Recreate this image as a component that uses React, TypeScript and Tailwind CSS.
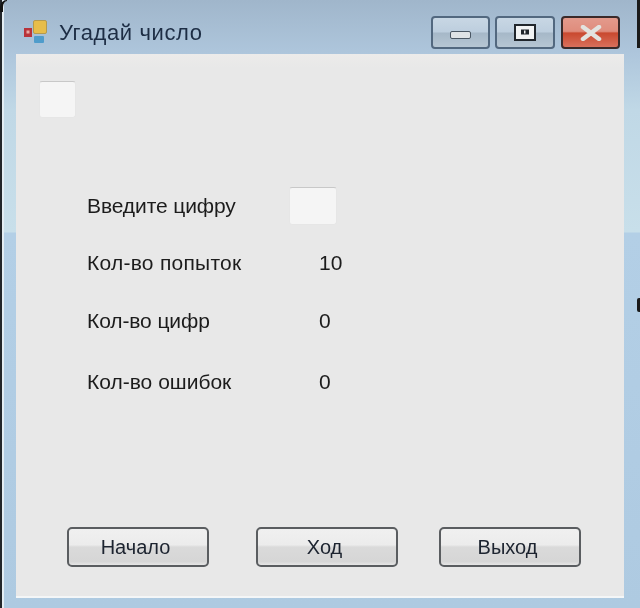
const FONT = "font-['Liberation_Sans',Arial,sans-serif]";

function CaptionButton({ className, children }: { className: string; children: React.ReactNode }) {
  return (
    <div className={`flex h-[33px] items-center justify-center rounded-[4px] border-2 blur-[0.3px] ${className}`}>
      {children}
    </div>
  );
}

function ActionButton({ label, className }: { label: string; className: string }) {
  return (
    <button
      type="button"
      className={`flex h-[40px] w-[142px] items-center justify-center rounded-[5px] border-2 border-[#5a5d60] bg-[linear-gradient(#f0f0f0_0%,#ececec_44%,#dadada_50%,#d6d6d6_90%,#e6e6e6_100%)] pr-[5px] text-[20px] text-[#1d2430] ${className}`}
    >
      <span className="blur-[0.5px]">{label}</span>
    </button>
  );
}

function TextBox({ className }: { className: string }) {
  return (
    <div className={`rounded-[3px] border border-[#e6e6e6] border-t-[#c8c8c8] bg-[#f5f5f5] blur-[0.3px] ${className}`} />
  );
}

function InfoRow({ label, value, className, labelClass }: { label: string; value: string; className: string; labelClass: string }) {
  return (
    <div className={`flex items-center text-[21px] leading-[24px] text-[#1c1c1c] ${className}`}>
      <span className={`w-[232px] blur-[0.5px] ${labelClass}`}>{label}</span>
      <span className="blur-[0.5px]">{value}</span>
    </div>
  );
}

export default function App() {
  return (
    <div className={`h-[608px] w-[640px] overflow-hidden ${FONT} relative flex flex-col bg-[linear-gradient(#a0b6cb_0px,#aec6dc_54px,#c0d8e6_110px,#c8dfea_232px,#b3cfe6_233px,#aecae1_608px)]`}>
      {/* title bar */}
      <div className="flex h-[54px] shrink-0 items-start pl-[23px] pr-[20px] pt-[16px]">
        <svg width="25" height="28" viewBox="0 0 25 28" className="mt-[4px] shrink-0 blur-[0.5px]">
          <rect x="1" y="8" width="8" height="9" fill="#b8333a" />
          <rect x="3.5" y="10.5" width="3" height="3" fill="#e9a9a4" />
          <rect x="10.5" y="0.5" width="13" height="13" rx="1.5" fill="#e7bd4a" stroke="#b49a4e" />
          <rect x="11" y="16" width="10" height="7" rx="1" fill="#4f9ccb" />
        </svg>
        <span className="ml-[11px] mt-[4px] text-[22px] leading-[26px] tracking-[0.6px] text-[#1d2d44] blur-[0.5px]">Угадай число</span>
        <div className="ml-auto flex items-center">
          <CaptionButton className="w-[59px] border-[#52687f] bg-[linear-gradient(#c8d7e4_0%,#bdcede_48%,#a6b8c8_52%,#b6c6d3_100%)]">
            <div className="mt-[5px] h-[8px] w-[21px] rounded-[2px] border border-[#4a5764] bg-[#dfe3e6]" />
          </CaptionButton>
          <CaptionButton className="ml-[5px] w-[60px] border-[#52687f] bg-[linear-gradient(#c8d7e4_0%,#bdcede_48%,#a6b8c8_52%,#b6c6d3_100%)]">
            <svg width="22" height="17" viewBox="0 0 22 17">
              <rect x="1" y="1" width="20" height="15" fill="#f1f3f4" stroke="#20262c" strokeWidth="2" />
              <rect x="7" y="5.5" width="8" height="5" fill="#20262c" />
              <rect x="10" y="6.5" width="1.5" height="3" fill="#f1f3f4" />
            </svg>
          </CaptionButton>
          <CaptionButton className="ml-[6px] w-[59px] border-[#3a2a2a] bg-[linear-gradient(#e39a8c_0%,#df8c7c_46%,#c9492f_52%,#d9705c_100%)]">
            <svg width="22" height="16" viewBox="0 0 22 16">
              <path d="M3 2 L19 14 M19 2 L3 14" stroke="#e2e3df" strokeWidth="4.5" strokeLinecap="round" />
            </svg>
          </CaptionButton>
        </div>
      </div>

      {/* client area */}
      <div className="mx-[16px] flex h-[544px] shrink-0 flex-col border-b-2 border-[#f4f6f7] bg-[linear-gradient(#ecebea_0px,#e8e8e8_14px)] pt-[27px]">
        <TextBox className="ml-[23px] h-[37px] w-[37px]" />
        <div className="ml-[71px] mt-[69px] flex h-[38px] items-center text-[21px] text-[#1c1c1c]">
          <span className="w-[202px] tracking-[-0.1px] blur-[0.5px]">Введите цифру</span>
          <TextBox className="h-[38px] w-[48px]" />
        </div>
        <InfoRow label="Кол-во попыток" value="10" labelClass="tracking-[0.25px]" className="ml-[71px] mt-[26px]" />
        <InfoRow label="Кол-во цифр" value="0" labelClass="tracking-[-0.1px]" className="ml-[71px] mt-[34px]" />
        <InfoRow label="Кол-во ошибок" value="0" labelClass="tracking-[0px]" className="ml-[71px] mt-[37px]" />
        <div className="ml-[51px] mt-[133px] flex">
          <ActionButton label="Начало" className="" />
          <ActionButton label="Ход" className="ml-[47px]" />
          <ActionButton label="Выход" className="ml-[41px]" />
        </div>
      </div>

      {/* dark screen edge around the captured window */}
      <div className="absolute bottom-0 left-0 top-0 w-[2px] bg-[#22262a]" />
      <div className="absolute bottom-0 left-[2px] top-0 w-[2px] bg-[#e3edf3]" />
      <div className="absolute left-0 top-0 h-[12px] w-[7px] rounded-tl-[7px] border-l-[3px] border-t-[1px] border-[#141414]" />
      <div className="absolute right-0 top-0 h-[48px] w-[3px] bg-[#1a1a1a]" />
      <div className="absolute right-0 top-[298px] h-[14px] w-[3px] rounded-l-[2px] bg-[#1a1a1a]" />
    </div>
  );
}
